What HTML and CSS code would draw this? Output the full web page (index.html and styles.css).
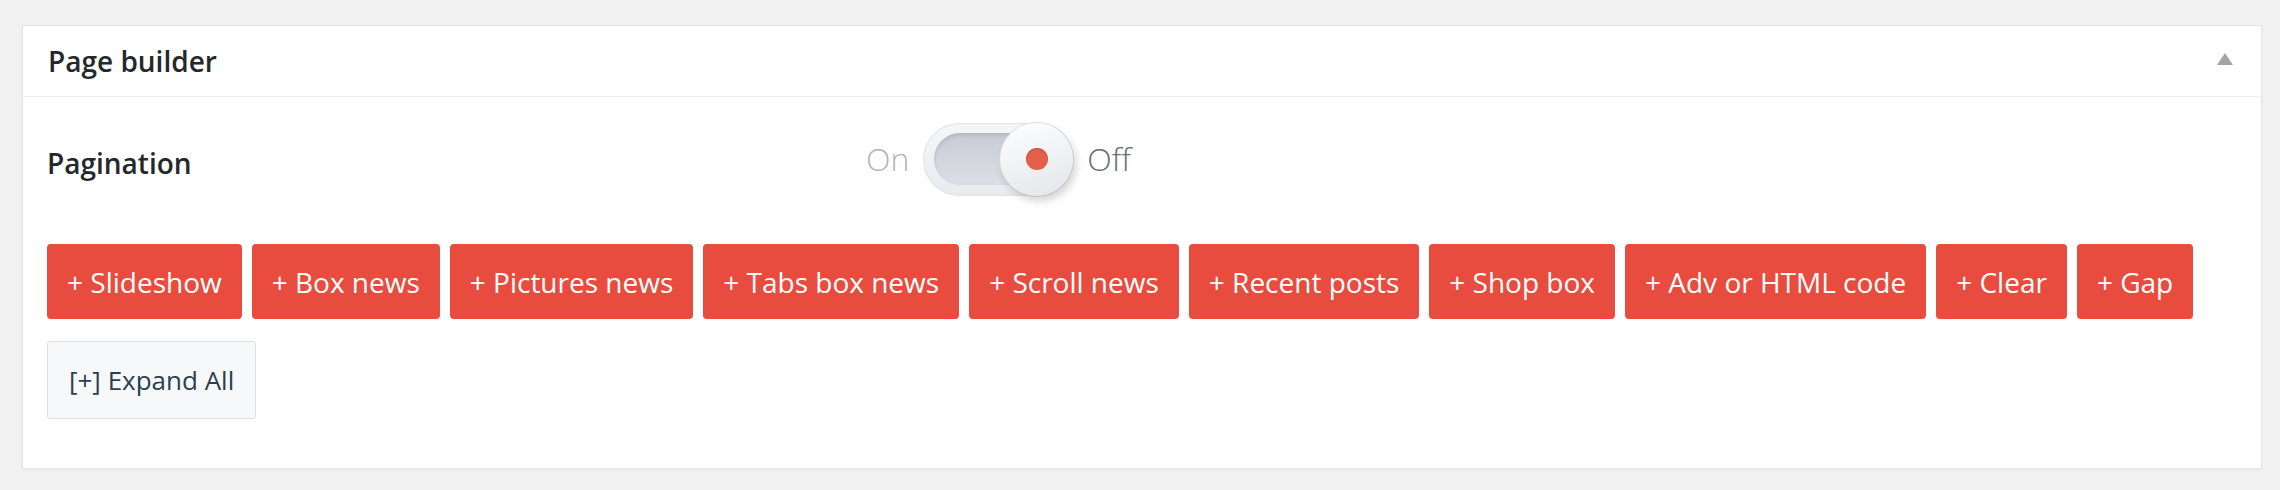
FILE: index.html
```html
<!DOCTYPE html>
<html lang="en">
<head>
<meta charset="utf-8">
<title>Page builder</title>
<link rel="stylesheet" href="styles.css">
</head>
<body>
<div class="page">
  <section class="postbox">
    <header class="postbox-header">
      <h2 class="postbox-title">Page builder</h2>
      <svg class="toggle-arrow" width="16" height="12" viewBox="0 0 16 12" aria-hidden="true"><polygon points="8,0 16,12 0,12" fill="#a0a5aa"/></svg>
    </header>
    <div class="postbox-body">
      <div class="option-row">
        <div class="option-label">Pagination</div>
        <div class="switch-group">
          <span class="switch-on">On</span>
          <div class="switch">
            <div class="switch-track"></div>
            <div class="switch-knob"><span class="switch-dot"></span></div>
          </div>
          <span class="switch-off">Off</span>
        </div>
      </div>
      <div class="button-row">
        <button class="add-btn">+ Slideshow</button>
        <button class="add-btn">+ Box news</button>
        <button class="add-btn">+ Pictures news</button>
        <button class="add-btn">+ Tabs box news</button>
        <button class="add-btn">+ Scroll news</button>
        <button class="add-btn">+ Recent posts</button>
        <button class="add-btn">+ Shop box</button>
        <button class="add-btn">+ Adv or HTML code</button>
        <button class="add-btn">+ Clear</button>
        <button class="add-btn">+ Gap</button>
      </div>
      <div class="expand-row">
        <button class="expand-btn">[+] Expand All</button>
      </div>
    </div>
  </section>
</div>
</body>
</html>
```
FILE: styles.css
```css
html, body {
  margin: 0;
  padding: 0;
  background: #f1f1f1;
  font-family: "Open Sans", "Noto Sans", "Liberation Sans", sans-serif;
}

.page {
  padding: 25px 18px 20px 22px;
}

.postbox {
  background: #fff;
  border: 1px solid #e5e5e5;
  box-shadow: 0 1px 2px rgba(0, 0, 0, 0.05);
}

.postbox-header {
  display: flex;
  align-items: center;
  justify-content: space-between;
  height: 70px;
  padding: 0 28px 0 25px;
  border-bottom: 1px solid #eeeeee;
}

.postbox-title {
  margin: 0;
  font-size: 28px;
  font-weight: 600;
  color: #23282d;
  line-height: 1;
}

.toggle-arrow {
  display: block;
  margin-top: -4px;
}

.postbox-body {
  padding: 25px 24px 49px 24px;
}

.option-row {
  display: flex;
  align-items: center;
  height: 74px;
}

.option-label {
  width: 819px;
  font-size: 28px;
  font-weight: 600;
  color: #23282d;
  padding-top: 8px;
}

.switch-group {
  display: flex;
  align-items: center;
}

.switch-on,
.switch-off {
  font-size: 32px;
  font-weight: 300;
  line-height: 1;
}

.switch-on {
  color: #b3b3b3;
  margin-right: 14px;
}

.switch-off {
  color: #686c75;
  margin-left: 14px;
}

.switch {
  position: relative;
  width: 150px;
  height: 73px;
  border-radius: 37px;
  background: linear-gradient(#f5f6f8, #e8eaee);
  box-shadow: inset 0 0 0 1px #e2e4e9;
}

.switch-track {
  position: absolute;
  left: 11px;
  top: 10px;
  width: 110px;
  height: 52px;
  border-radius: 26px;
  background: linear-gradient(#c8cbd4, #dcdfe5);
  box-shadow: inset 0 2px 4px rgba(0, 0, 0, 0.12);
}

.switch-knob {
  position: absolute;
  right: 0;
  top: 0;
  width: 73px;
  height: 73px;
  border-radius: 50%;
  background: linear-gradient(160deg, #ffffff, #e2e4e9);
  box-shadow: 3px 5px 8px rgba(0, 0, 0, 0.18), 0 0 0 1px #dfe1e6;
  display: flex;
  align-items: center;
  justify-content: center;
}

.switch-dot {
  width: 22px;
  height: 22px;
  border-radius: 50%;
  background: #e3604b;
  box-shadow: inset 0 1px 2px rgba(0, 0, 0, 0.2);
}

.button-row {
  display: flex;
  flex-wrap: wrap;
  gap: 10px;
  margin-top: 48px;
}

.add-btn {
  height: 75px;
  padding: 0 20px;
  border: none;
  border-radius: 4px;
  background: #e74c3f;
  color: #ffffff;
  font-family: inherit;
  font-size: 28px;
  font-weight: 400;
  line-height: 1;
  cursor: pointer;
}

.expand-row {
  margin-top: 22px;
}

.expand-btn {
  height: 78px;
  padding: 0 21px;
  border: 1px solid #dcdfe4;
  border-radius: 3px;
  background: #f7f8f9;
  color: #2c3e50;
  font-family: inherit;
  font-size: 26px;
  font-weight: 400;
  line-height: 1;
  cursor: pointer;
}
```
